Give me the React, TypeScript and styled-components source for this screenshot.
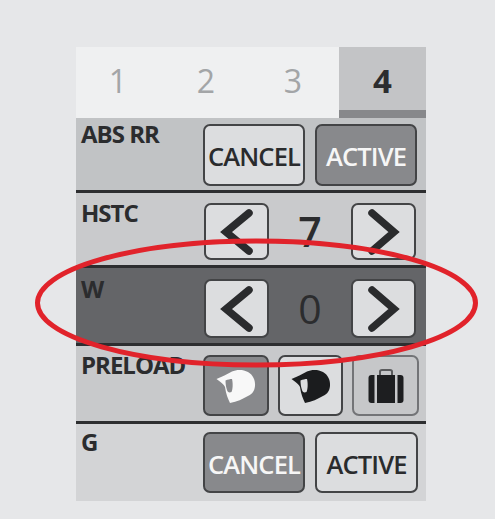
import React from 'react';
import styled, { createGlobalStyle } from 'styled-components';

const GlobalStyle = createGlobalStyle`
  html, body {
    margin: 0;
    padding: 0;
    background: #e6e7e9;
  }
  body {
    font-family: 'Open Sans', 'Liberation Sans', sans-serif;
  }
`;

const Page = styled.div`
  position: relative;
  width: 495px;
  height: 519px;
  padding: 47px 0 0 76px;
  box-sizing: border-box;
  overflow: hidden;
`;

const Panel = styled.div`
  width: 350px;
  display: flex;
  flex-direction: column;
`;

const Tabs = styled.div`
  display: grid;
  grid-template-columns: 84px 92px 87px 87px;
  height: 71px;
  background: #eff0f1;
`;

const Tab = styled.div<{ $active?: boolean }>`
  display: flex;
  align-items: center;
  justify-content: center;
  box-sizing: border-box;
  font-size: ${p => (p.$active ? 33 : 32)}px;
  font-weight: ${p => (p.$active ? 700 : 400)};
  color: ${p => (p.$active ? '#2c2d2f' : '#a3a5a7')};
  background: ${p => (p.$active ? '#c3c4c6' : 'transparent')};
  border-bottom: 8px solid ${p => (p.$active ? '#87888b' : 'transparent')};
  padding-top: 4px;

  &:nth-child(3) {
    padding-right: 5px;
  }
`;

const Row = styled.div<{ $height: number; $bg: string; $top: number }>`
  display: grid;
  grid-template-columns: 127px 1fr;
  height: ${p => p.$height}px;
  box-sizing: border-box;
  padding-top: ${p => p.$top}px;
  background: ${p => p.$bg};
  border-bottom: 3px solid #2d2e30;
`;

const LastRow = styled(Row)`
  border-bottom: none;
`;

const Label = styled.div`
  padding-left: 5px;
  font-size: 24px;
  font-weight: 700;
  line-height: 26px;
  margin-top: -3px;
  letter-spacing: -1px;
  color: #2b2c2e;
  white-space: nowrap;
`;

const Actions = styled.div`
  display: flex;
  gap: 10px;
`;

const Button = styled.div<{ $on?: boolean; $width: number; $height: number; $muted?: boolean }>`
  display: flex;
  align-items: center;
  justify-content: center;
  box-sizing: border-box;
  width: ${p => p.$width}px;
  height: ${p => p.$height}px;
  border-radius: 7px;
  border: 2px solid ${p => (p.$muted ? '#737477' : '#434446')};
  background: ${p => (p.$on ? '#88898c' : p.$muted ? '#c6c7c9' : '#dcdddf')};
  color: ${p => (p.$on ? '#f6f6f6' : '#2a2b2d')};
  font-size: 25.5px;
  font-weight: 600;
  letter-spacing: -0.9px;
  padding-top: 2px;
  flex-shrink: 0;
`;

const Value = styled.div<{ $light?: boolean }>`
  width: 74px;
  margin: 0 4px;
  display: flex;
  align-items: center;
  justify-content: center;
  padding-bottom: 6px;
  font-size: 41px;
  font-weight: ${p => (p.$light ? 400 : 600)};
  color: #2b2c2e;
`;

const Stepper = styled(Actions)`
  gap: 0;
  margin-left: 1px;
`;

const IconGroup = styled(Actions)`
  gap: 9px;
`;

const Annotation = styled.svg`
  position: absolute;
  left: 0;
  top: 0;
  pointer-events: none;
`;

function Chevron({ dir }: { dir: 'left' | 'right' }) {
  const d = dir === 'left' ? 'M45 9 L22 28 L45 47' : 'M21 9 L43 28 L21 47';
  return (
    <svg width="61" height="53" viewBox="2 2 61 53" fill="none">
      <path d={d} stroke="#2a2b2d" strokeWidth="7.5" strokeLinecap="round" strokeLinejoin="miter" />
    </svg>
  );
}

function Helmet({ color, visor }: { color: string; visor: string }) {
  return (
    <svg width="40" height="35" viewBox="0 0 40 35">
      <path
        d="M0.5 10 C6 8 11 5 16 2.5 C20 0.5 27 0 32 3 C37 6 39.5 11 39 17 C38.5 23 35 26 31 27.5 C27 30 21 32.5 14 34 C12 30 10 25 9 18 C8 15 4 13 0.5 10 Z"
        fill={color}
      />
      <path d="M9.5 11.5 C12 10.5 14 10 16 10 C17 14 17 20 15.5 23 C13 24 11.5 23 11 21 C10 18 9.5 15 9.5 11.5 Z" fill={visor} />
    </svg>
  );
}

function Suitcase() {
  return (
    <svg width="36" height="35" viewBox="0 0 36 35">
      <path d="M12 6 V2.5 C12 1.5 13 1 14 1 H22 C23 1 24 1.5 24 2.5 V6" fill="none" stroke="#5a5b5d" strokeWidth="2" />
      <rect x="9" y="6" width="18" height="28" fill="#1d1e20" />
      <path d="M0.5 9 C0.5 7 1.5 6 3.5 6 H6.5 V34 H3.5 C1.5 34 0.5 33 0.5 31 Z" fill="#1d1e20" />
      <path d="M35.5 9 C35.5 7 34.5 6 32.5 6 H29.5 V34 H32.5 C34.5 34 35.5 33 35.5 31 Z" fill="#1d1e20" />
    </svg>
  );
}

export default function App(): JSX.Element {
  return (
    <Page>
      <GlobalStyle />
      <Panel>
        <Tabs>
          <Tab>1</Tab>
          <Tab>2</Tab>
          <Tab>3</Tab>
          <Tab $active>4</Tab>
        </Tabs>
        <Row $height={75} $bg="#c1c3c5" $top={6}>
          <Label>ABS RR</Label>
          <Actions>
            <Button $width={102} $height={62}>CANCEL</Button>
            <Button $width={102} $height={62} $on>ACTIVE</Button>
          </Actions>
        </Row>
        <Row $height={75} $bg="#c9cacc" $top={10}>
          <Label>HSTC</Label>
          <Stepper>
            <Button $width={65} $height={57}><Chevron dir="left" /></Button>
            <Value>7</Value>
            <Button $width={65} $height={57}><Chevron dir="right" /></Button>
          </Stepper>
        </Row>
        <Row $height={78} $bg="#646568" $top={11}>
          <Label>W</Label>
          <Stepper>
            <Button $width={65} $height={59}><Chevron dir="left" /></Button>
            <Value $light>0</Value>
            <Button $width={65} $height={59}><Chevron dir="right" /></Button>
          </Stepper>
        </Row>
        <Row $height={78} $bg="#c8c9cb" $top={9}>
          <Label>PRELOAD</Label>
          <IconGroup>
            <Button $width={66} $height={61} $on><Helmet color="#f8f8f8" visor="#88898c" /></Button>
            <Button $width={65} $height={61}><Helmet color="#1b1c1e" visor="#dcdddf" /></Button>
            <Button $width={67} $height={61} $muted><Suitcase /></Button>
          </IconGroup>
        </Row>
        <LastRow $height={77} $bg="#d3d4d6" $top={8}>
          <Label>G</Label>
          <Actions>
            <Button $width={102} $height={61} $on>CANCEL</Button>
            <Button $width={103} $height={61}>ACTIVE</Button>
          </Actions>
        </LastRow>
      </Panel>
      <Annotation width="495" height="519" viewBox="0 0 495 519">
        <ellipse cx="256.5" cy="303" rx="219" ry="62" fill="none" stroke="#e1232b" strokeWidth="5" />
      </Annotation>
    </Page>
  );
}
